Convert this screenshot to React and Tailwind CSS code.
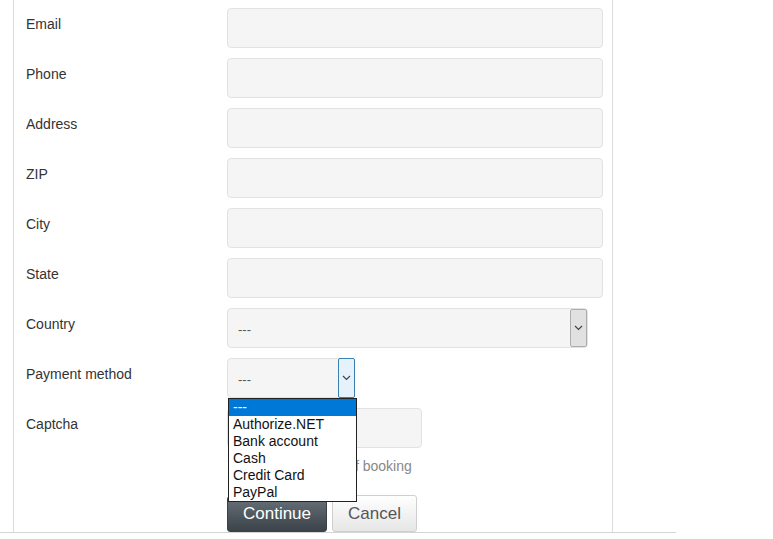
import React from 'react';

const FIELDS = ['Email', 'Phone', 'Address', 'ZIP', 'City', 'State'];
const PAYMENT_OPTIONS = ['---', 'Authorize.NET', 'Bank account', 'Cash', 'Credit Card', 'PayPal'];

function Chevron() {
  return (
    <svg width="9" height="6" viewBox="0 0 9 6" fill="none">
      <path d="M1 1l3.5 3.5L8 1" stroke="#444" strokeWidth="1.2" />
    </svg>
  );
}

function Row({ label, children }) {
  return (
    <div className="flex h-[40px]">
      <div className="w-[213px] pl-[12px] pt-[6px] text-[14px] leading-[20px] text-[#333]">{label}</div>
      {children}
    </div>
  );
}

export default function App() {
  return (
    <div className="w-[676px] h-[533px] border-b border-[#d4d4d4] bg-white font-['Liberation_Sans',Arial,sans-serif]">
      <div className="ml-[13px] w-[600px] h-full border-x border-[#dcdcdc] pt-[8px] flex flex-col gap-[10px]">
        {FIELDS.map(f => (
          <Row key={f} label={f}>
            <div className="w-[376px] h-[40px] rounded-[4px] border border-[#e2e2e2] bg-[#f5f5f5]"></div>
          </Row>
        ))}

        <Row label="Country">
          <div className="w-[361px] h-[40px] rounded-[4px] border border-[#e2e2e2] bg-[#f5f5f5] flex items-center">
            <span className="flex-1 pl-[10px] pt-[3px] text-[13px] text-[#555]">---</span>
            <div className="w-[17px] h-[38px] bg-[#e1e1e1] border border-[#adadad] rounded-[2px] flex items-center justify-center">
              <Chevron />
            </div>
          </div>
        </Row>

        <Row label="Payment method">
          <div className="relative w-[128px] h-[40px] rounded-[4px] border border-[#e2e2e2] bg-[#f5f5f5] flex items-center">
            <span className="flex-1 pl-[10px] pt-[3px] text-[13px] text-[#555]">---</span>
            <div className="w-[17px] h-[40px] -mr-px bg-[#e5f1fb] border border-[#3c7fb1] rounded-[2px] flex items-center justify-center">
              <Chevron />
            </div>
            {/* open option list, drawn over the rows below */}
            <ul className="absolute left-0 top-[39px] w-[129px] z-10 border border-[#222] bg-white text-[14px] leading-[17px] text-[#111]">
              {PAYMENT_OPTIONS.map((o, i) => (
                <li key={o} className={i === 0 ? 'bg-[#0078d7] text-white pl-[4px]' : 'pl-[4px]'}>{o}</li>
              ))}
            </ul>
          </div>
        </Row>

        <Row label="Captcha">
          <div className="w-[195px] h-[40px] rounded-[4px] border border-[#e2e2e2] bg-[#f5f5f5]"></div>
        </Row>

        <div className="pl-[218px] -mt-[2px] text-[14px] leading-[20px] text-[#888]">I agree with terms of booking</div>

        <div className="pl-[213px] mt-[9px] flex items-end gap-[5px]">
          <button className="w-[100px] h-[36px] rounded-[3px] bg-gradient-to-b from-[#69727a] to-[#3b4349] border border-[#3a4147] text-white text-[17px]">Continue</button>
          <button className="w-[85px] h-[37px] rounded-[3px] bg-gradient-to-b from-white to-[#e6e6e6] border border-[#cfcfcf] text-[#555] text-[17px]">Cancel</button>
        </div>
      </div>
    </div>
  );
}
